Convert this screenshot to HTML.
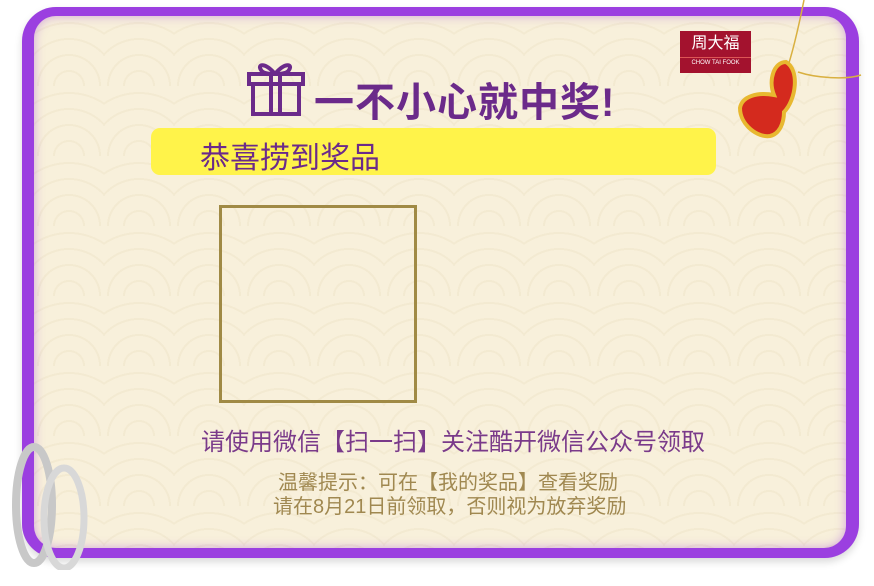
<!DOCTYPE html>
<html><head><meta charset="utf-8"><style>
*{margin:0;padding:0;box-sizing:border-box}
body{width:874px;height:586px;background:#fff;position:relative;overflow:hidden;font-family:"Liberation Sans","Noto Sans CJK SC",sans-serif}
.outer{position:absolute;left:22px;top:7px;width:837px;height:551px;background:#9b3fe0;border-radius:34px;box-shadow:0 4px 8px rgba(0,0,0,.15)}
.inner{position:absolute;left:34px;top:16px;width:812px;height:532px;background:#f8f0db;border-radius:22px;box-shadow:inset 0 0 10px rgba(170,90,220,.5);
background-image:repeating-radial-gradient(circle at 50% 100%,transparent 0 14px,rgba(235,222,190,.35) 14px 16px);background-size:70px 70px}
.t{position:absolute;white-space:nowrap}
</style></head><body>
<div class="outer"></div>
<div class="inner"></div>
<svg class="t" style="left:247px;top:58px" width="58" height="58" viewBox="0 0 58 58" fill="none" stroke="#6b2a8a" stroke-width="4">
<rect x="2" y="16" width="54" height="10"/><rect x="6" y="26" width="46" height="30"/>
<line x1="24" y1="16" x2="24" y2="56"/><line x1="33" y1="16" x2="33" y2="56"/>
<path d="M28 16 C18 4 10 6 14 12 C16 16 24 16 28 16 C32 16 40 16 42 12 C46 6 38 4 28 16"/></svg>
<div class="t" style="left:314px;top:70px;font-size:40px;font-weight:bold;color:#6b2a8a;letter-spacing:1px">一不小心就中奖!</div>
<div class="t" style="left:151px;top:128px;width:565px;height:47px;background:#fff34a;border-radius:9px"></div>
<div class="t" style="left:200px;top:133px;font-size:30px;color:#6b2a8a">恭喜捞到奖品</div>
<div class="t" style="left:680px;top:31px;width:71px;height:42px;background:#a3122e;color:#fff;text-align:center;font-size:16px;line-height:26px">周大福<div style="font-size:6px;line-height:10px;border-top:1px solid #d55">CHOW TAI FOOK</div></div>
<svg class="t" style="left:736px;top:0" width="130" height="145" viewBox="0 0 130 145">
<path d="M68 0 C62 30 56 55 50 72 M62 72 C80 78 110 80 125 75" stroke="#d9b040" stroke-width="1.5" fill="none"/>
<path d="M50 62 C38 62 32 80 38 95 C22 92 6 96 4 108 C4 125 22 138 34 136 C44 134 48 122 48 112 C60 100 64 70 50 62Z" fill="#d42a1e" stroke="#e8b830" stroke-width="4"/>
</svg>
<div class="t" style="left:219px;top:205px;width:198px;height:198px;border:3px solid #a08a45"></div>
<div class="t" style="left:201px;top:422px;font-size:24px;color:#7a3a8a">请使用微信【扫一扫】关注酷开微信公众号领取</div>
<div class="t" style="left:278px;top:466px;font-size:20px;color:#a08850">温馨提示：可在【我的奖品】查看奖励</div>
<div class="t" style="left:273px;top:490px;font-size:20px;color:#a08850">请在8月21日前领取，否则视为放弃奖励</div>
<svg class="t" style="left:4px;top:440px" width="110" height="130" viewBox="0 0 110 130">
<ellipse cx="30" cy="65" rx="18" ry="58" fill="none" stroke="#c8c8c8" stroke-width="8"/>
<ellipse cx="60" cy="78" rx="20" ry="50" fill="none" stroke="#d8d8d8" stroke-width="7"/>
</svg>
</body></html>
